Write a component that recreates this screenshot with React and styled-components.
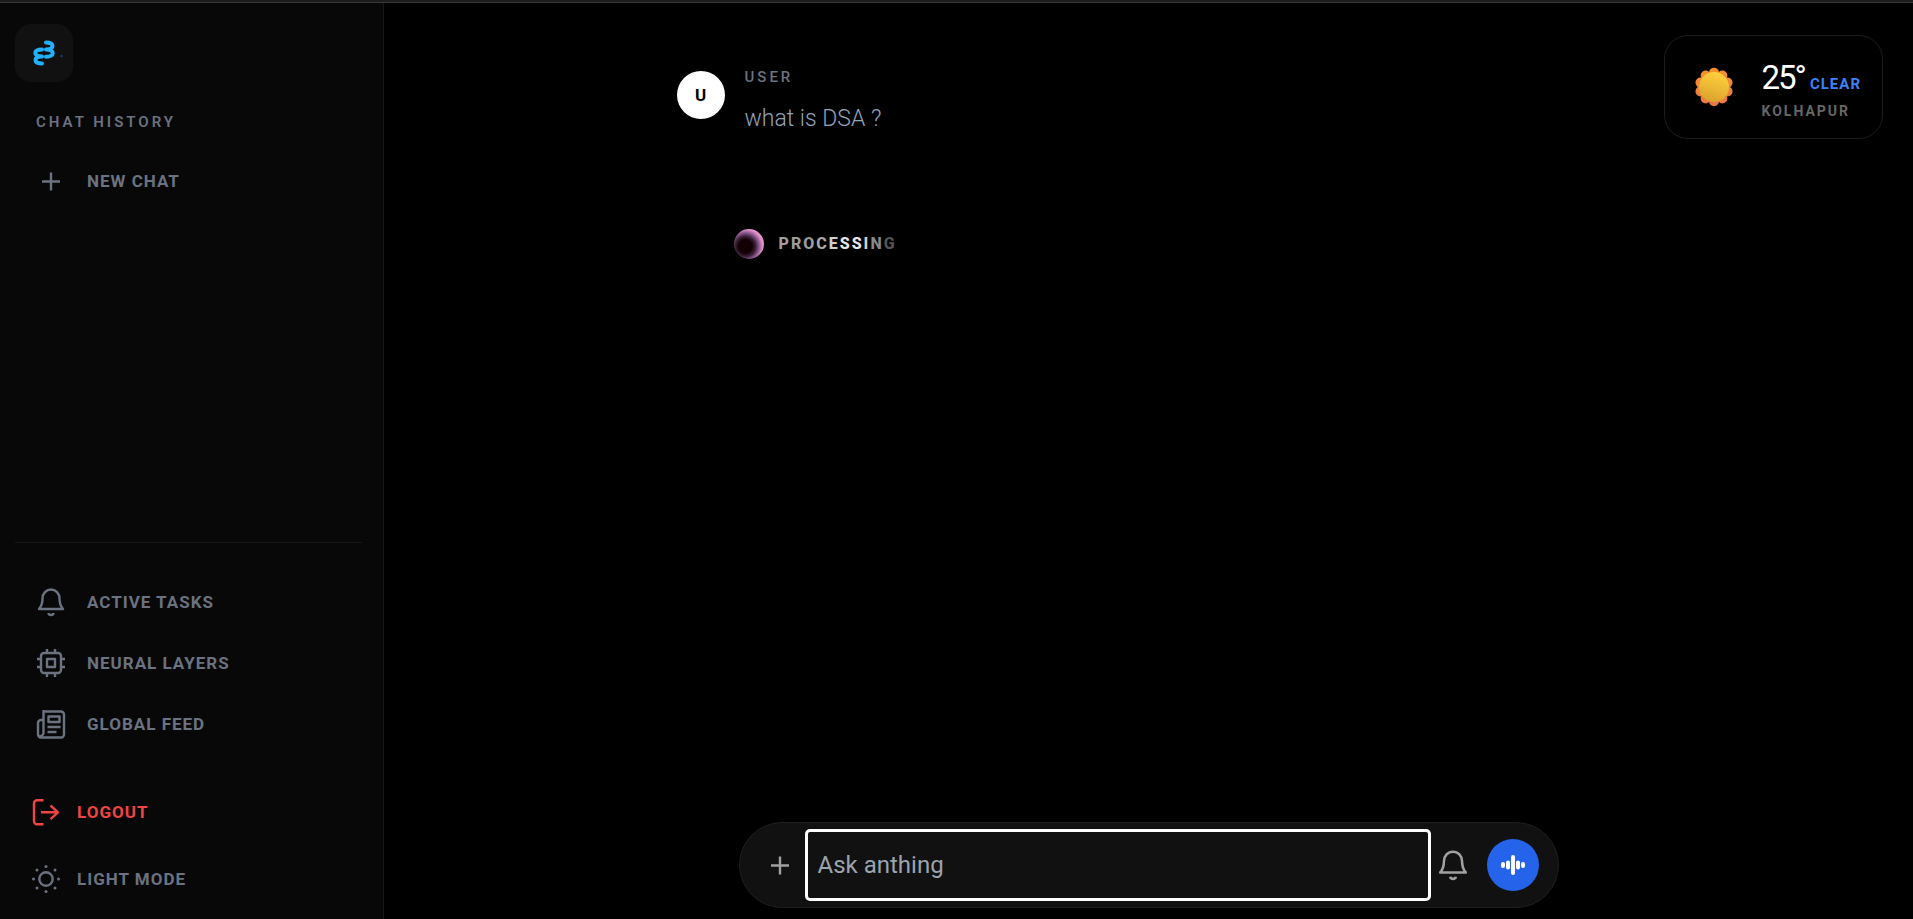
import React from "react";
import styled, { createGlobalStyle } from "styled-components";

const GlobalStyle = createGlobalStyle`
  *, *::before, *::after { box-sizing: border-box; }
  body {
    margin: 0;
    background: #000;
    color: #fff;
    font-family: Roboto, "Liberation Sans", sans-serif;
  }
  button, input { font: inherit; color: inherit; }
  button { cursor: pointer; background: none; border: 0; padding: 0; }
  h2, p { margin: 0; }
`;

const Page = styled.div`
  display: flex;
  flex-direction: column;
  min-height: 100vh;
`;

const TopEdge = styled.div`
  height: 3px;
  background: #1c1c1c;
  border-bottom: 1px solid #383838;
`;

const Columns = styled.div`
  display: flex;
  flex: 1;
`;

const Sidebar = styled.aside`
  display: flex;
  flex-direction: column;
  flex: 0 0 384px;
  padding: 21px 21px 7px 15px;
  background: #080808;
  border-right: 1px solid #171717;
  color: #6b7280;
`;

const LogoButton = styled.button`
  display: grid;
  place-items: center;
  width: 58px;
  height: 58px;
  border-radius: 16px;
  background: #111;
`;

const HistoryTitle = styled.h2`
  margin-top: 30px;
  padding-left: 21px;
  font-size: 15px;
  line-height: 20px;
  font-weight: 600;
  letter-spacing: 3px;
`;

const NavList = styled.nav`
  display: flex;
  flex-direction: column;
  padding-left: ${(p) => (p.$tight ? "16px" : "21px")};
`;

const HistoryList = styled(NavList)`
  margin-top: 18px;
`;

const LowerNav = styled.div`
  display: flex;
  flex-direction: column;
  margin-top: auto;
  border-top: 1px solid #171717;
  padding-top: 28px;
  gap: 24px;
`;

const NavButton = styled.button`
  display: flex;
  align-items: center;
  gap: ${(p) => (p.$compact ? "16px" : "21px")};
  height: ${(p) => (p.$compact ? "67px" : "61px")};
  color: ${(p) => (p.$danger ? "#ef4444" : "#6b7280")};
  font-size: 17px;
  line-height: 24px;
  font-weight: 700;
  letter-spacing: 1px;
  text-align: left;
  svg { flex: none; }
`;

const Main = styled.main`
  display: flex;
  flex-direction: column;
  align-items: center;
  flex: 1;
  position: relative;
  min-width: 0;
  padding: 68px 24px 11px;
`;

const Thread = styled.section`
  width: 100%;
  max-width: 944px;
`;

const Message = styled.article`
  display: flex;
  gap: 20px;
`;

const Avatar = styled.div`
  display: grid;
  place-items: center;
  flex: none;
  width: 48px;
  height: 48px;
  border-radius: 50%;
  background: #fff;
  color: #000;
  font-size: 17px;
  font-weight: 700;
`;

const Author = styled.h2`
  font-size: 15px;
  line-height: 12px;
  font-weight: 500;
  letter-spacing: 3px;
  color: #6b7280;
`;

const MessageText = styled.p`
  margin-top: 20px;
  font-size: 23px;
  line-height: 32px;
  font-weight: 300;
  color: #94a3b8;
`;

const Status = styled.div`
  display: flex;
  align-items: center;
  gap: 15px;
  margin: 94px 0 0 57px;
`;

const Orb = styled.div`
  width: 30px;
  height: 30px;
  border-radius: 50%;
  background: radial-gradient(circle at 38% 58%, #120004 0 26%, #3a2238 40%, #8f5a90 54%, #d98cc4 66%, #f0b0dc 84%);
`;

const StatusText = styled.div`
  font-size: 16px;
  line-height: 20px;
  font-weight: 800;
  letter-spacing: 2px;
`;

const Letter = styled.span`
  color: ${(p) => p.$tone};
`;

const Weather = styled.aside`
  position: absolute;
  top: 32px;
  right: 30px;
  display: flex;
  align-items: center;
  gap: 28px;
  padding: 18px 21px 18px 29px;
  border: 1px solid #1c1c1c;
  border-radius: 24px;
`;

const Reading = styled.div`
  display: flex;
  align-items: baseline;
  gap: 5px;
`;

const Degrees = styled.span`
  font-size: 33px;
  line-height: 48px;
  font-weight: 400;
  letter-spacing: -2px;
`;

const Condition = styled.span`
  font-size: 15px;
  font-weight: 700;
  letter-spacing: 1px;
  color: #3b82f6;
`;

const City = styled.p`
  font-size: 14px;
  line-height: 18px;
  font-weight: 700;
  letter-spacing: 2px;
  color: #666;
`;

const Composer = styled.form`
  display: flex;
  align-items: center;
  width: 100%;
  max-width: 820px;
  height: 86px;
  margin-top: auto;
  padding: 0 19px 0 24px;
  border: 1px solid #1f1f1f;
  border-radius: 43px;
  background: #111;
`;

const IconButton = styled.button`
  display: grid;
  place-items: center;
  flex: none;
  width: 32px;
  height: 32px;
  color: #a0a0a0;
`;

const Prompt = styled.input`
  flex: 1;
  min-width: 0;
  height: 66px;
  margin: 0 9px 0 12px;
  padding: 0 10px;
  border: 0;
  border-radius: 2px;
  outline: 3px solid #fff;
  background: transparent;
  font-size: 24px;
  &::placeholder { color: #9ca3af; opacity: 1; }
`;

const VoiceButton = styled.button`
  display: grid;
  place-items: center;
  flex: none;
  width: 52px;
  height: 52px;
  margin-left: 18px;
  border-radius: 50%;
  background: #2563eb;
  color: #fff;
`;

const Icon = ({ size = 30, children }) => (
  <svg width={size} height={size} viewBox="0 0 30 30" fill="none" stroke="currentColor" strokeWidth="2.4" strokeLinejoin="round" aria-hidden="true">
    {children}
  </svg>
);

const PlusIcon = () => (
  <Icon><path d="M15 6.500v18M6 15.500h18" /></Icon>
);

const BellIcon = ({ size }) => (
  <Icon size={size}>
    <path d="M3 22h24c-3.300-3.700-3.500-6.500-3.500-10.500a8.500 9 0 0 0-17 0c0 4-.2 6.800-3.500 10.500z" />
    <path d="M12.300 26c.6 2.700 4.800 2.700 5.400 0" />
  </Icon>
);

const ChipIcon = () => (
  <Icon>
    <rect x="5" y="5" width="20" height="20" rx="3" />
    <rect x="11" y="11" width="8" height="8" />
    <path d="M11 1v4M19 1v4M11 25v4M19 25v4M1 11h4M1 19h4M25 11h4M25 19h4" />
  </Icon>
);

const NewsIcon = () => (
  <Icon>
    <path d="M7.500 1v23a3.500 3.500 0 0 1-4.500 3M7 2.500h18a3 3 0 0 1 3 3v20a3 3 0 0 1-3 3H5a3 3 0 0 1-3-3V14a3 3 0 0 1 3-3h2.500" />
    <path d="M12.500 7.500h11v5.500h-11zM11.500 18h13M11.500 23h9" />
  </Icon>
);

const LogoutIcon = () => (
  <Icon>
    <path d="M12.500 3.300H6a3 3 0 0 0-3 3v18a3 3 0 0 0 3 3h6.500M10 15.300h17M19.500 8.500l7.500 6.800-7.500 6.800" />
  </Icon>
);

const SunIcon = () => (
  <Icon>
    <circle cx="15" cy="15" r="6.700" />
    <g fill="currentColor" stroke="none">
      <circle cx="15" cy="2.500" r="1.500" /><circle cx="15" cy="27.500" r="1.500" />
      <circle cx="2.500" cy="15" r="1.500" /><circle cx="27.500" cy="15" r="1.500" />
      <circle cx="6" cy="6" r="1.500" /><circle cx="24" cy="6" r="1.500" />
      <circle cx="6" cy="24" r="1.500" /><circle cx="24" cy="24" r="1.500" />
    </g>
  </Icon>
);

const WaveIcon = () => (
  <svg width="26" height="22" viewBox="0 0 26 22" stroke="currentColor" strokeWidth="4" strokeLinecap="round" aria-hidden="true">
    <path d="M3 10v2M8 8.500v5M13 3v16M18 8.500v5M23 10v2" />
  </svg>
);

const LogoMark = () => (
  <svg width="48" height="48" viewBox="0 0 48 48" fill="none" stroke="#22b0ff" strokeWidth="4" strokeLinecap="round" aria-hidden="true">
    <path d="M26 13.500c8.500 0 8.500 7 1 7M26 20.500c9 0 9 7.300 0 7.300M22 20.500c-9 0-9 7 0 7M21 27.500c-7.500 0-7.500 7 1 7" />
    <circle cx="41.500" cy="27" r="1" fill="#0757a8" stroke="none" />
  </svg>
);

const petals = Array.from({ length: 10 }, (_, i) => {
  const a = (i * Math.PI) / 5;
  return [20 + 14.2 * Math.sin(a), 20 - 14.2 * Math.cos(a)];
});

const WeatherSun = () => (
  <svg width="40" height="40" viewBox="0 0 40 40" role="img" aria-label="Sun">
    <defs>
      <linearGradient id="disc" x1="0.7" y1="0" x2="0.4" y2="1">
        <stop offset="0" stopColor="#ffd23c" /><stop offset="1" stopColor="#dba32d" />
      </linearGradient>
      <linearGradient id="petal" gradientUnits="userSpaceOnUse" x1="20" y1="0" x2="20" y2="40">
        <stop offset="0" stopColor="#f9932a" /><stop offset="1" stopColor="#e97845" />
      </linearGradient>
    </defs>
    {petals.map(([x, y], i) => <circle key={i} cx={x} cy={y} r="5" fill="url(#petal)" />)}
    <circle cx="20" cy="20" r="15" fill="url(#disc)" />
  </svg>
);

const letters = [
  ["P", "#a0a0a0"], ["R", "#9c9c9c"], ["O", "#9c9c9c"], ["C", "#a8a8a8"], ["E", "#d0d0d0"],
  ["S", "#e8e8e8"], ["S", "#e8e8e8"], ["I", "#d0d0d0"], ["N", "#888"], ["G", "#555"],
];

export default function App() {
  return (
    <Page>
      <GlobalStyle />
      <TopEdge />
      <Columns>
        <Sidebar>
          <LogoButton type="button" aria-label="Home"><LogoMark /></LogoButton>
          <HistoryTitle>CHAT HISTORY</HistoryTitle>
          <HistoryList>
            <NavButton type="button"><PlusIcon />NEW CHAT</NavButton>
          </HistoryList>
          <LowerNav>
            <NavList>
              <NavButton type="button"><BellIcon />ACTIVE TASKS</NavButton>
              <NavButton type="button"><ChipIcon />NEURAL LAYERS</NavButton>
              <NavButton type="button"><NewsIcon />GLOBAL FEED</NavButton>
            </NavList>
            <NavList $tight>
              <NavButton type="button" $compact $danger><LogoutIcon />LOGOUT</NavButton>
              <NavButton type="button" $compact><SunIcon />LIGHT MODE</NavButton>
            </NavList>
          </LowerNav>
        </Sidebar>
        <Main>
          <Thread>
            <Message>
              <Avatar>U</Avatar>
              <div>
                <Author>USER</Author>
                <MessageText>what is DSA ?</MessageText>
              </div>
            </Message>
            <Status role="status">
              <Orb />
              <StatusText>
                {letters.map(([char, tone], i) => <Letter key={i} $tone={tone}>{char}</Letter>)}
              </StatusText>
            </Status>
          </Thread>
          <Weather>
            <WeatherSun />
            <div>
              <Reading><Degrees>25°</Degrees><Condition>CLEAR</Condition></Reading>
              <City>KOLHAPUR</City>
            </div>
          </Weather>
          <Composer>
            <IconButton type="button" aria-label="Add attachment"><PlusIcon /></IconButton>
            <Prompt type="text" aria-label="Message" placeholder="Ask anthing" />
            <IconButton type="button" aria-label="Reminders"><BellIcon size={32} /></IconButton>
            <VoiceButton type="button" aria-label="Voice input"><WaveIcon /></VoiceButton>
          </Composer>
        </Main>
      </Columns>
    </Page>
  );
}
